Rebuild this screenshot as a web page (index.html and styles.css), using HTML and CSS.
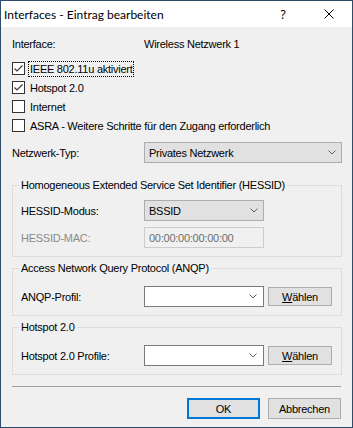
FILE: index.html
```html
<!DOCTYPE html>
<html>

<head>
    <title>Interfaces - Eintrag bearbeiten</title>
    <link rel="stylesheet" href="styles.css">
</head>

<body>
    <div class="window">
        <!-- Title bar -->
        <div class="titlebar">
            <span class="title">Interfaces - Eintrag bearbeiten</span>
            <span class="caption-btn">?</span>
            <span class="caption-btn">
                <svg width="10" height="10" viewBox="0 0 10 10">
                    <path d="M0.5 0.5 L9.5 9.5 M9.5 0.5 L0.5 9.5" stroke="#000" stroke-width="1" fill="none" />
                </svg>
            </span>
        </div>

        <div class="content">
            <div class="row info">
                <span class="label">Interface:</span>
                <span>Wireless Netzwerk 1</span>
            </div>

            <!-- Checkboxes -->
            <div class="checks">
                <div class="check">
                    <span class="box">
                        <svg width="11" height="11" viewBox="0 0 11 11">
                            <path d="M1.5 5.5 L4 8 L9.5 2.5" stroke="#3c3c3c" stroke-width="1.2" fill="none" />
                        </svg>
                    </span>
                    <span class="check-label focused">IEEE 802.11u aktiviert</span>
                </div>
                <div class="check">
                    <span class="box">
                        <svg width="11" height="11" viewBox="0 0 11 11">
                            <path d="M1.5 5.5 L4 8 L9.5 2.5" stroke="#3c3c3c" stroke-width="1.2" fill="none" />
                        </svg>
                    </span>
                    <span class="check-label">Hotspot 2.0</span>
                </div>
                <div class="check">
                    <span class="box"></span>
                    <span class="check-label">Internet</span>
                </div>
                <div class="check">
                    <span class="box"></span>
                    <span class="check-label">ASRA - Weitere Schritte für den Zugang erforderlich</span>
                </div>
            </div>

            <div class="row type-row">
                <span class="label">Netzwerk-Typ:</span>
                <div class="dropdown wide">
                    <span>Privates Netzwerk</span>
                    <svg class="chevron" width="8" height="5" viewBox="0 0 8 5">
                        <path d="M0.5 0.5 L4 4 L7.5 0.5" stroke="#606060" stroke-width="1" fill="none" />
                    </svg>
                </div>
            </div>

            <!-- HESSID -->
            <fieldset class="group hessid">
                <legend>Homogeneous Extended Service Set Identifier (HESSID)</legend>
                <div class="row">
                    <span class="label">HESSID-Modus:</span>
                    <div class="dropdown">
                        <span>BSSID</span>
                        <svg class="chevron" width="8" height="5" viewBox="0 0 8 5">
                            <path d="M0.5 0.5 L4 4 L7.5 0.5" stroke="#606060" stroke-width="1" fill="none" />
                        </svg>
                    </div>
                </div>
                <div class="row disabled">
                    <span class="label">HESSID-MAC:</span>
                    <div class="textbox">00:00:00:00:00:00</div>
                </div>
            </fieldset>

            <!-- ANQP -->
            <fieldset class="group">
                <legend>Access Network Query Protocol (ANQP)</legend>
                <div class="row">
                    <span class="label">ANQP-Profil:</span>
                    <div class="combo">
                        <svg class="chevron" width="8" height="5" viewBox="0 0 8 5">
                            <path d="M0.5 0.5 L4 4 L7.5 0.5" stroke="#606060" stroke-width="1" fill="none" />
                        </svg>
                    </div>
                    <button class="btn pick"><u>W</u>ählen</button>
                </div>
            </fieldset>

            <!-- Hotspot 2.0 -->
            <fieldset class="group">
                <legend>Hotspot 2.0</legend>
                <div class="row">
                    <span class="label">Hotspot 2.0 Profile:</span>
                    <div class="combo">
                        <svg class="chevron" width="8" height="5" viewBox="0 0 8 5">
                            <path d="M0.5 0.5 L4 4 L7.5 0.5" stroke="#606060" stroke-width="1" fill="none" />
                        </svg>
                    </div>
                    <button class="btn pick"><u>W</u>ählen</button>
                </div>
            </fieldset>
        </div>

        <div class="separator"></div>

        <div class="footer">
            <button class="btn default">OK</button>
            <button class="btn">Abbrechen</button>
        </div>
    </div>
</body>

</html>
```

FILE: styles.css
```css
body {
    margin: 0;
    font-family: 'Liberation Sans', Arial, sans-serif;
    font-size: 11px;
    letter-spacing: -0.25px;
    color: #000;
}

.window {
    width: 353px;
    height: 428px;
    box-sizing: border-box;
    border: 1px solid #2e4d6b;
    background-color: #f0f0f0;
    display: flex;
    flex-direction: column;
}

.titlebar {
    height: 26px;
    background-color: #fff;
    display: flex;
    align-items: center;
    padding-left: 3px;
    font-family: 'Lato', sans-serif;
    font-size: 12px;
    letter-spacing: 0;
}

.title {
    flex: 1;
}

.caption-btn {
    width: 46px;
    height: 26px;
    display: flex;
    align-items: center;
    justify-content: center;
    font-family: 'Noto Sans', sans-serif;
}

.content {
    padding: 0 10px 0 11px;
}

.row {
    display: flex;
    align-items: center;
}

.label {
    width: 132px;
    flex-shrink: 0;
}

.info {
    height: 14px;
    margin-top: 10px;
}

/* checkboxes */
.checks {
    margin-top: 8px;
}

.check {
    display: flex;
    align-items: center;
    height: 19px;
}

.box {
    width: 13px;
    height: 13px;
    box-sizing: border-box;
    border: 1px solid #333;
    background-color: #fff;
    display: flex;
    align-items: center;
    justify-content: center;
}

.check-label {
    margin-left: 3px;
    padding: 1px 0 1px 1px;
    border: 1px dotted transparent;
}

.check-label.focused {
    border-color: #000;
}

.type-row {
    margin-top: 7px;
}

/* controls */
.dropdown,
.combo,
.textbox {
    height: 21px;
    box-sizing: border-box;
    display: flex;
    align-items: center;
    justify-content: space-between;
    padding: 0 5px 0 4px;
    width: 120px;
}

.dropdown {
    background-color: #e1e1e1;
    border: 1px solid #adadad;
}

.dropdown.wide {
    width: 198px;
}

.combo {
    background-color: #fff;
    border: 1px solid #7a7a7a;
    justify-content: flex-end;
    padding-right: 6px;
}

.textbox {
    background-color: #f0f0f0;
    border: 1px solid #ccc;
    color: #6d6d6d;
}

.disabled .label {
    color: #8a8a8a;
}

/* group boxes */
.group {
    margin: 16px 0 0 0;
    padding: 0 0 8px 8px;
    border: 1px solid #dcdcdc;
    min-width: 0;
}

.group legend {
    padding: 0 2px;
    margin-left: -2px;
    line-height: 13px;
}

.group .row {
    margin-top: 11px;
}

.group .label {
    width: 123px;
}

.hessid .row {
    margin-top: 8px;
}

.hessid .row + .row {
    margin-top: 6px;
}

.group + .group {
    margin-top: 5px;
}

/* buttons */
.btn {
    font-family: 'Liberation Sans', Arial, sans-serif;
    font-size: 11px;
    letter-spacing: -0.25px;
    color: #000;
    height: 21px;
    width: 73px;
    padding: 0;
    background-color: #e1e1e1;
    border: 1px solid #adadad;
}

.btn.pick {
    width: 64px;
    height: 19px;
    margin-left: 4px;
}

.btn.default {
    border: 2px solid #0078d7;
}

.separator {
    margin: 11px 11px 0 11px;
    border-top: 1px solid #a0a0a0;
}

.footer {
    display: flex;
    justify-content: flex-end;
    gap: 8px;
    padding: 11px 11px 0 0;
}
```
